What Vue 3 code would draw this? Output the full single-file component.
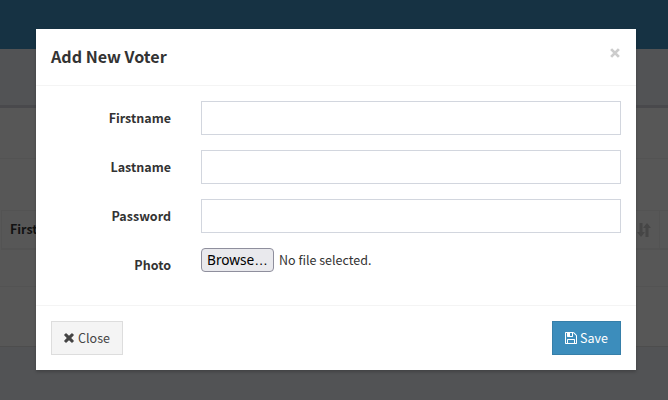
<script setup>
const fields = [
  { id: 'firstname', label: 'Firstname', type: 'text' },
  { id: 'lastname', label: 'Lastname', type: 'text' },
  { id: 'password', label: 'Password', type: 'password' },
]
</script>

<template>
  <div class="page">
    <header class="navbar"></header>
    <main class="content">
      <section class="box">
        <div class="box-header"></div>
        <div class="table-tools"></div>
        <div class="table-head">
          <div class="cell">
            <span class="column-name">Firstname</span>
            <svg class="sort" viewBox="0 0 14 14"><path d="M2.5 0h3v9H8L4 14 0 9h2.500zM8.500 14h3V5H14L10 0 6 5h2.500z" /></svg>
          </div>
        </div>
        <div class="table-row"></div>
        <div class="table-end"></div>
      </section>
    </main>
    <div class="overlay">
      <div class="modal" role="dialog">
        <div class="modal-header">
          <h4 class="title">Add New Voter</h4>
          <button class="dismiss" aria-label="Close">
            <svg viewBox="0 0 9 9"><path d="M1 1l7 7M8 1L1 8" /></svg>
          </button>
        </div>
        <form class="modal-body" @submit.prevent>
          <div v-for="f in fields" :key="f.id" class="group">
            <label :for="f.id">{{ f.label }}</label>
            <input :id="f.id" :type="f.type" class="control" />
          </div>
          <div class="group photo">
            <label>Photo</label>
            <div class="file">
              <button type="button" class="browse">Browse<span class="dots">…</span></button>
              <span class="file-name">No file selected.</span>
            </div>
          </div>
        </form>
        <div class="modal-footer">
          <button class="btn close">
            <svg class="icon-x" viewBox="110 110 1188 1228"><path d="M1298 1086q0 40-28 68l-136 136q-28 28-68 28t-68-28L704 996l-294 294q-28 28-68 28t-68-28l-136-136q-28-28-28-68t28-68l294-294-294-294q-28-28-28-68t28-68l136-136q28-28 68-28t68 28l294 294 294-294q28-28 68-28t68 28l136 136q28 28 28 68t-28 68L976 724l294 294q28 28 28 68z" /></svg>
            <span>Close</span>
          </button>
          <button class="btn save">
            <svg class="icon-save" viewBox="0 0 1536 1536"><path d="M384 1408h768v-384H384v384zm896 0h128V512q0-14-10-38.500t-20-34.500l-281-281q-10-10-34-20t-39-10v416q0 40-28 68t-68 28H352q-40 0-68-28t-28-68V128H128v1280h128V992q0-40 28-68t68-28h832q40 0 68 28t28 68v416zM896 480V160q0-13-9.500-22.500T864 128H672q-13 0-22.500 9.500T640 160v320q0 13 9.500 22.500T672 512h192q13 0 22.500-9.500T896 480zm640 32v928q0 40-28 68t-68 28H96q-40 0-68-28t-28-68V96q0-40 28-68T96 0h928q40 0 88 20t76 48l280 280q28 28 48 76t20 88z" /></svg>
            <span>Save</span>
          </button>
        </div>
      </div>
    </div>
  </div>
</template>

<style>
body { margin: 0; overflow: hidden; }
</style>

<style scoped>
* { box-sizing: border-box; }
.page {
  position: relative;
  display: flex;
  flex-direction: column;
  height: 400px;
  overflow: hidden;
  background: #525355;
  color: #333;
  font: 12.5px/20px "Noto Sans CJK SC", "Noto Sans", sans-serif;
}
.navbar { height: 49px; background: #163243; }
.content { padding-top: 56px; }
.box { height: 242px; border-top: 3px solid #49494c; background: #575757; border-bottom: 1px solid #4d4d4d; }
.box-header { height: 51px; border-bottom: 1px solid #535353; }
.table-tools { height: 51px; }
.table-head {
  height: 40px;
  margin-left: 1px;
  border: 1px solid #535353;
  border-right: 0;
  border-bottom-width: 2px;
  color: #121212;
  font-weight: 700;
}
.cell {
  display: flex;
  align-items: center;
  justify-content: space-between;
  width: 658px;
  height: 37px;
  padding: 0 8px 0 8px;
  border-right: 1px solid #535353;
}
.column-name { padding-bottom: 1px; }
.sort { width: 14px; height: 14px; fill: #464646; }
.table-row { height: 37px; border-bottom: 1px solid #535353; }
.overlay { position: absolute; inset: 0; padding: 29px 32px 0 36px; }
.modal { width: 600px; height: 341px; background: #fff; box-shadow: 0 2px 3px rgba(0, 0, 0, .2); }
.modal-header {
  display: flex;
  justify-content: space-between;
  height: 57px;
  padding: 15px;
  border-bottom: 1px solid #f4f4f4;
}
.title { margin: 0; font-size: 16.1px; line-height: 24px; font-weight: 700; }
.dismiss { display: flex; width: 11px; height: 19px; padding: 4px 0; border: 0; background: none; }
.dismiss svg { flex: none; width: 10px; height: 10px; fill: none; stroke: #ccc; stroke-width: 2.5; }
.modal-body { display: flex; flex-direction: column; gap: 15px; height: 219px; padding: 15px; }
.group { display: flex; height: 34px; }
label { width: 120px; margin-right: 30px; padding-top: 7px; text-align: right; font-weight: 700; }
.control { width: 420px; height: 34px; padding: 6px 12px; border: 1px solid #d2d6de; border-radius: 0; background: #fff; outline: none; }
.file { display: flex; height: 24px; gap: 5px; }
.browse {
  width: 73px;
  height: 24px;
  padding: 0;
  border: 1px solid #8f8f9d;
  border-radius: 4px;
  background: #e9e9ed;
  color: #000;
  font: 13.7px/20px "Noto Sans", sans-serif;
  white-space: nowrap;
}
.dots { font-family: "Liberation Sans", sans-serif; }
.file-name { line-height: 24px; }
.modal-footer {
  display: flex;
  justify-content: space-between;
  height: 65px;
  padding: 15px;
  border-top: 1px solid #f4f4f4;
}
.btn { display: flex; align-items: center; justify-content: center; gap: 3px; height: 34px; padding: 0; border: 1px solid; font: inherit; }
.close { gap: 4px; width: 72px; background: #f4f4f4; border-color: #ddd; color: #444; }
.save { width: 69px; background: #3c8dbc; border-color: #367fa9; color: #fff; }
.icon-x { width: 10px; height: 10px; fill: #444; }
.icon-save { width: 12px; height: 12px; fill: #fff; }
</style>
